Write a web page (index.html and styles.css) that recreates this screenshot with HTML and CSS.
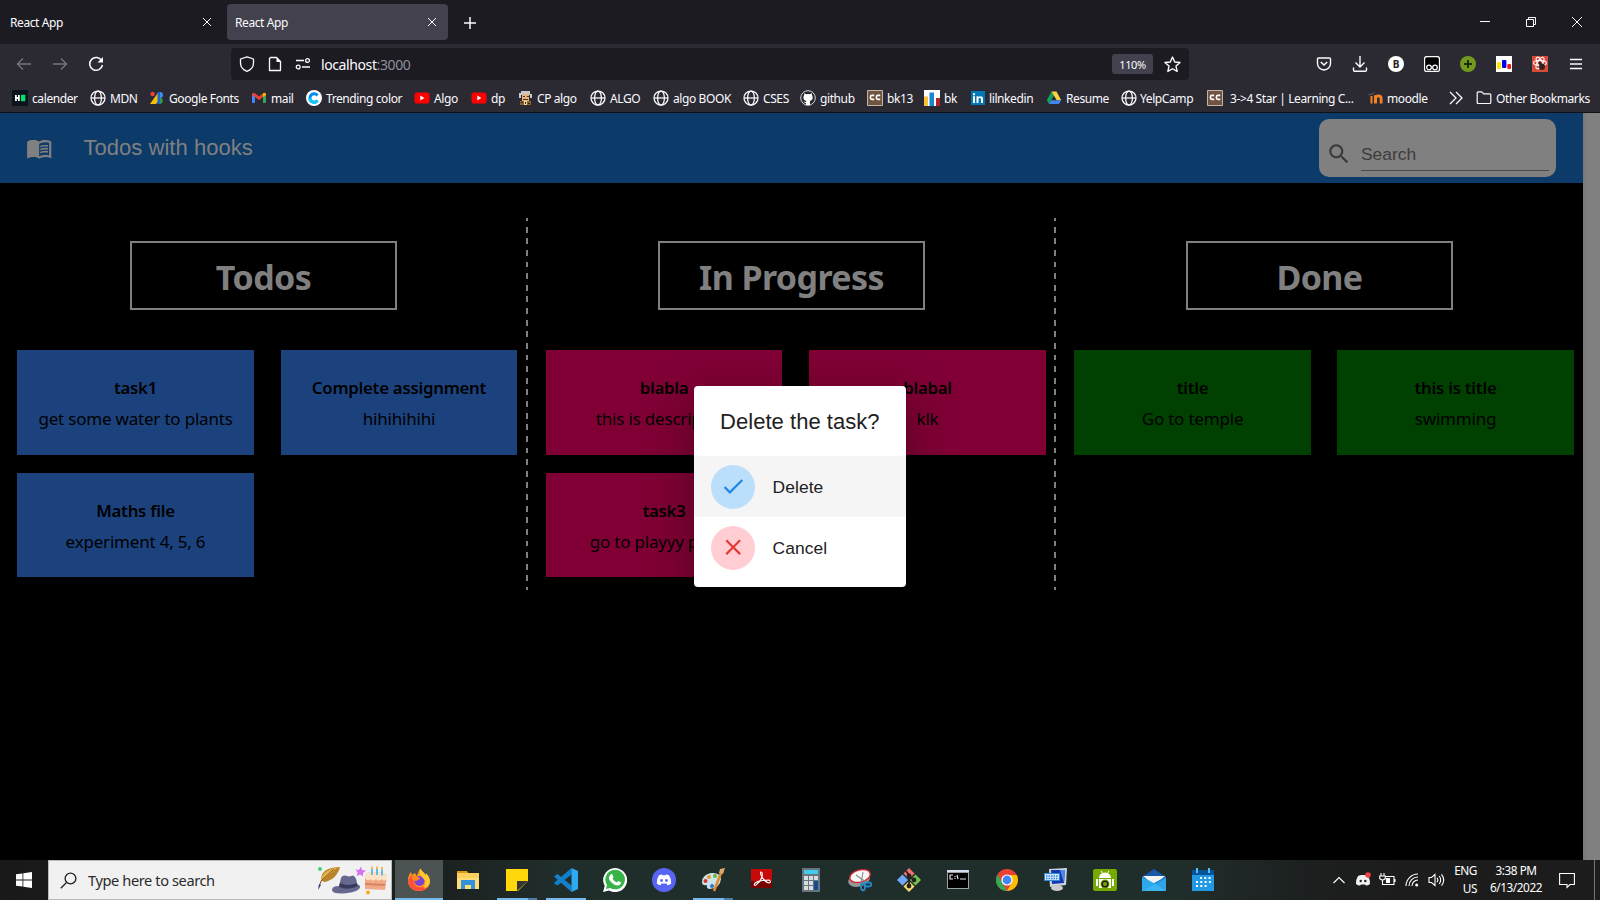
FILE: index.html
```html
<!DOCTYPE html>
<html lang="en">
<head>
<meta charset="utf-8">
<title>React App</title>
<link rel="stylesheet" href="styles.css">
</head>
<body>
<svg class="defs" width="0" height="0">
  <defs>
    <symbol id="globe" viewBox="0 0 16 16"><g fill="none" stroke="#fbfbfe" stroke-width="1.25"><circle cx="8" cy="8" r="7"/><ellipse cx="8" cy="8" rx="3.4" ry="7"/><path d="M1 8h14"/></g></symbol>
    <symbol id="yt" viewBox="0 0 16 16"><rect x="0.5" y="2.5" width="15" height="11" rx="2.6" fill="#f00"/><path d="M6.3 5.6v4.8L10.4 8z" fill="#fff"/></symbol>
    <symbol id="cc" viewBox="0 0 16 16"><path d="M.5.5h15v15H.5z" fill="#6f5541" stroke="#c5b5a5"/><path d="M7.200 5.400H5Q3.400 5.400 3.400 7v.8q0 1.600 1.600 1.600h2.200M13.200 5.400H11Q9.400 5.400 9.400 7v.8q0 1.600 1.600 1.600h2.200" fill="none" stroke="#fff" stroke-width="1.600"/></symbol>
  </defs>
</svg>
<div class="screen">
  <header class="tabs">
    <div class="tab"><span>React App</span><svg width="10" height="10" viewBox="0 0 10 10"><path d="M1 1l8 8M9 1L1 9"/></svg></div>
    <div class="tab active"><span>React App</span><svg width="10" height="10" viewBox="0 0 10 10"><path d="M1 1l8 8M9 1L1 9"/></svg></div>
    <svg class="plus" width="14" height="14" viewBox="0 0 14 14"><path d="M7 1v12M1 7h12"/></svg>
    <div class="winctl">
      <svg width="10" height="10" viewBox="0 0 10 10"><path d="M0 4.500h10"/></svg>
      <svg width="10" height="10" viewBox="0 0 10 10"><path d="M.5 2.500h7v7h-7zM2.500 2.500v-2h7v7h-2"/></svg>
      <svg width="10" height="10" viewBox="0 0 10 10"><path d="M0 0l10 10M10 0L0 10"/></svg>
    </div>
  </header>

  <nav class="toolbar">
    <div class="navbtns">
      <svg class="dim" width="16" height="16" viewBox="0 0 16 16"><path d="M15 8H1.500M7 2.500L1.500 8 7 13.500"/></svg>
      <svg class="dim" width="16" height="16" viewBox="0 0 16 16"><path d="M1 8h13.500M9 2.500L14.500 8 9 13.500"/></svg>
      <svg width="16" height="16" viewBox="0 0 16 16"><path d="M13.800 5A6.400 6.400 0 1 0 14.400 9" stroke-width="1.500"/><path d="M15 1v5.500H9.500z" fill="#fbfbfe" stroke="none"/></svg>
    </div>
    <div class="urlbar">
      <svg width="16" height="16" viewBox="0 0 16 16"><path d="M8 .8L14.500 3v4c0 4-3 7-6.500 8.300C4.500 14 1.500 11 1.500 7V3z" stroke-linejoin="round"/></svg>
      <svg width="16" height="16" viewBox="0 0 16 16"><path d="M3.500 1.500h6l4 4v9h-11v-12z" stroke-linejoin="round"/><path d="M9.500 1v5h4.500z" fill="#fbfbfe" stroke="none"/></svg>
      <svg width="16" height="16" viewBox="0 0 16 16"><path d="M1 4.500h8M7 11h8" stroke-width="1.500"/><circle cx="12.500" cy="4.500" r="1.900"/><circle cx="3.200" cy="11" r="1.900"/></svg>
      <span class="url">localhost<em>:3000</em></span>
      <span class="zoomlvl">110%</span>
      <svg class="star" width="17" height="17" viewBox="0 0 16 16"><path d="M8 1l2.100 4.600 5 .5-3.800 3.400 1.100 5L8 12l-4.400 2.500 1.100-5L.9 6.100l5-.5z" stroke-linejoin="round"/></svg>
    </div>
    <div class="ext">
      <svg width="16" height="16" viewBox="0 0 16 16"><path d="M2.500 2h11q1 0 1 1v4.500a6.500 6.500 0 0 1-13 0V3q0-1 1-1z" stroke-width="1.400"/><path d="M4.800 6L8 9l3.200-3" stroke-width="1.600"/></svg>
      <svg width="16" height="16" viewBox="0 0 16 16"><path d="M8 0v11M3.500 6.500L8 11l4.500-4.500M1.500 11.500v2.500q0 1.200 1.200 1.200h10.600q1.200 0 1.200-1.200v-2.500" stroke-width="1.400"/></svg>
      <span class="bold-b">B</span>
      <svg width="16" height="16" viewBox="0 0 16 16"><rect x=".5" y=".5" width="15" height="15" rx="2.500" fill="#000"/><circle cx="5" cy="11.500" r="2.300"/><circle cx="11" cy="11.500" r="2.300"/></svg>
      <svg width="16" height="16" viewBox="0 0 16 16"><circle cx="8" cy="8" r="8" fill="#739a1f" stroke="none"/><path d="M8 4v8M4 8h8" stroke="#1f2c0c" stroke-width="2"/></svg>
      <svg width="16" height="16" viewBox="0 0 16 16"><path fill="#fff" stroke="none" d="M0 0h16v16H0z"/><rect x="1" y="6" width="4" height="7" rx="1" fill="#ffe800" stroke="none"/><rect x="6" y="4" width="4.400" height="8" rx="1" fill="#0000f0" stroke="none"/><rect x="11.300" y="8" width="3.700" height="5" rx="1" fill="#f01818" stroke="none"/></svg>
      <svg width="16" height="16" viewBox="0 0 16 16"><path fill="#d64a38" stroke="none" d="M0 0h16v16H0z"/><g stroke-width="1.100"><ellipse cx="8" cy="7" rx="6.500" ry="2.500"/><ellipse cx="8" cy="7" rx="6.500" ry="2.500" transform="rotate(60 8 7)"/><ellipse cx="8" cy="7" rx="6.500" ry="2.500" transform="rotate(120 8 7)"/></g><ellipse cx="10" cy="10.800" rx="3" ry="3.200" fill="#35201e" stroke="none"/><circle cx="8" cy="7.200" r="1.400" fill="#35201e" stroke="none"/></svg>
      <svg width="16" height="16" viewBox="0 0 16 16"><path d="M2 3.500h12M2 8h12M2 12.500h12" stroke-width="1.400"/></svg>
    </div>
  </nav>

  <nav class="bookmarks">
    <a><svg viewBox="0 0 16 16"><path fill="#0b141e" d="M0 0h16v16H0z"/><path fill="#fff" d="M3 5h1.800v2H6V5h1.800v6H6V9H4.800v2H3z"/><rect x="9" y="4.800" width="4.300" height="6.400" rx=".6" fill="#05e36b"/></svg>calender</a>
    <a><svg><use href="#globe"/></svg>MDN</a>
    <a><svg viewBox="0 0 16 16"><path d="M8.500 2H11v6l-5 6H0z" fill="#fbbc04"/><circle cx="2.600" cy="4" r="2.200" fill="#ea4335"/><path d="M7.500 2h3v12h-3z" fill="#1a66d8"/><path d="M10 2a3 3 0 0 1 0 6z" fill="#3f8cf5"/><path d="M10 7.500a3.300 3.300 0 0 1 0 6.500z" fill="#2a9d4c"/></svg>Google Fonts</a>
    <a><svg viewBox="0 0 16 16"><path fill="#4285f4" d="M1 4l3 2.500V13H2q-1 0-1-1z"/><path fill="#34a853" d="M15 4l-3 2.500V13h2q1 0 1-1z"/><path fill="#ea4335" d="M1 4q1-2 3-.7L8 6.500l4-3.200v3.600L8 10 1 4.800z"/><path fill="#fbbc04" d="M12 3.300q2-1.300 3 .7v.9l-3 2.200z"/></svg>mail</a>
    <a><svg viewBox="0 0 16 16"><circle cx="8" cy="8" r="8" fill="#fff"/><path d="M11.500 5.500A4.200 4.200 0 1 0 11.500 10.500" fill="none" stroke="#008cf5" stroke-width="3"/><path d="M3.800 8A4.200 4.200 0 0 0 11.500 10.500" fill="none" stroke="#16c7f6" stroke-width="3"/></svg>Trending color</a>
    <a><svg><use href="#yt"/></svg>Algo</a>
    <a><svg><use href="#yt"/></svg>dp</a>
    <a><svg viewBox="0 0 16 16"><path d="M3 1h9v3h2v4h-2V5H3v3H1V3h2z" fill="#c6c9c8"/><path d="M4 4h7v7H4z" fill="#e8b27c"/><path d="M5 6h2v1H5zM9 6h2v1H9zM5 9h5v1H5z" fill="#50321f"/><path d="M2 11h11v4H2z" fill="#8a6230"/><path d="M6 11h3v4H6z" fill="#e9d8a4"/><path d="M7 12h1v2H7zM3 12h2v1H3zM10 13h2v1h-2z" fill="#37210f"/></svg>CP algo</a>
    <a><svg><use href="#globe"/></svg>ALGO</a>
    <a><svg><use href="#globe"/></svg>algo BOOK</a>
    <a><svg><use href="#globe"/></svg>CSES</a>
    <a><svg viewBox="0 0 16 16"><circle cx="8" cy="8" r="7.300" fill="#24292e" stroke="#d8d8dc" stroke-width="1"/><path fill="#fff" d="M4.200 3.300l2 1q1.800-.5 3.600 0l2-1 .3 2.300q1 1.400.4 3.300-.7 1.700-2.600 2l.2 4.100H6v-2q-1.800.3-2.500-1.400l1 .1q.7.700 1.600.2l.2-1q-2-.3-2.700-2-.6-1.900.4-3.300z"/></svg>github</a>
    <a><svg><use href="#cc"/></svg>bk13</a>
    <a><svg viewBox="0 0 16 16"><path fill="#fff" d="M0 0h16v16H0z"/><path fill="#fbbf3a" d="M0 6.500h4V16H0z"/><path fill="#1987cf" d="M5.500 2.500h4.500V16H5.500z"/><path fill="#b3202e" d="M12 8h4v8h-4z"/></svg>bk</a>
    <a><svg viewBox="0 0 16 16"><path fill="#0077b5" d="M1 1h14v14H1z"/><path fill="#fff" d="M3 6.300h2V13H3zM3 3.300h2v2H3zM6.500 6.300h2v.8q2-1.700 4.500.3V13h-2V8.500q-1.200-1.200-2.500 0V13h-2z"/></svg>lilnkedin</a>
    <a><svg viewBox="0 0 16 16"><path fill="#12a05c" d="M5.500 1.500L.8 10.300 3 14l5-8.500z"/><path fill="#ffcf45" d="M5.500 1.500h5l4.700 8.800h-4.500z"/><path fill="#4284f4" d="M3 14l2.200-3.700h10L13 14z"/></svg>Resume</a>
    <a><svg><use href="#globe"/></svg>YelpCamp</a>
    <a><svg><use href="#cc"/></svg>3-&gt;4 Star | Learning C...</a>
    <a><svg viewBox="0 0 16 16"><path fill="#f58220" d="M3.500 6h2v7.500h-2zM7 5.500q7.500-3 8.500 2v6h-2.800V8q-1.200-1.500-2.700 0v5.500H7z"/><path d="M0 4.500L8 2l-2 3-4 .5z" fill="#4b4648"/></svg>moodle</a>
    <svg class="more" viewBox="0 0 16 16"><path d="M2 2l6 6-6 6M8 2l6 6-6 6" fill="none" stroke="#fbfbfe" stroke-width="1.300"/></svg>
    <a class="other"><svg viewBox="0 0 16 16"><path d="M1.200 2.800q0-1 1-1h3.500l2 2h6.100q1 0 1 1v7.700q0 1-1 1H2.200q-1 0-1-1z" fill="none" stroke="#fbfbfe" stroke-width="1.200"/></svg>Other Bookmarks</a>
  </nav>

  <main class="page">
    <div class="app">
      <div class="appbar">
        <svg class="book" viewBox="0 0 24 24"><path d="M21 5c-1.110-.35-2.330-.5-3.500-.5-1.950 0-4.050.4-5.500 1.500-1.450-1.100-3.550-1.500-5.500-1.500S2.450 4.900 1 6v14.650c0 .25.25.5.5.5.1 0 .15-.05.25-.05C3.100 20.450 5.050 20 6.500 20c1.950 0 4.050.4 5.500 1.500 1.350-.85 3.800-1.500 5.500-1.500 1.650 0 3.350.3 4.750 1.050.1.050.15.050.25.050.25 0 .5-.25.5-.5V6c-.6-.45-1.250-.75-2-1zm0 13.500c-1.100-.35-2.300-.5-3.500-.5-1.700 0-4.150.65-5.500 1.500V8c1.350-.85 3.800-1.500 5.500-1.500 1.200 0 2.400.15 3.500.5v11.500zM17.500 10.500c.88 0 1.730.09 2.500.26V9.240c-.79-.15-1.640-.24-2.500-.24-1.700 0-3.240.29-4.500.83v1.660c1.130-.64 2.700-.99 4.500-.99zM13 12.490v1.660c1.130-.64 2.700-.99 4.500-.99.88 0 1.730.09 2.500.26V11.900c-.79-.15-1.640-.24-2.500-.24-1.700 0-3.240.3-4.500.83zM17.500 14.330c-1.700 0-3.240.29-4.500.83v1.660c1.130-.64 2.700-.99 4.500-.99.88 0 1.730.09 2.500.26v-1.520c-.79-.16-1.640-.24-2.500-.24z"/></svg>
        <h6>Todos with hooks</h6>
        <div class="search">
          <svg viewBox="0 0 24 24"><path d="M15.500 14h-.79l-.28-.27C15.410 12.590 16 11.110 16 9.500 16 5.910 13.090 3 9.500 3S3 5.910 3 9.500 5.910 16 9.500 16c1.610 0 3.090-.59 4.230-1.570l.27.28v.79l5 4.990L20.490 19l-4.990-5zm-6 0C7.010 14 5 11.990 5 9.500S7.010 5 9.500 5 14 7.010 14 9.500 11.990 14 9.500 14z"/></svg>
          <span>Search</span>
        </div>
      </div>
      <div class="board">
        <section class="col todo">
          <h2>Todos</h2>
          <div class="cards">
            <article><h4>task1</h4><p>get some water to plants</p></article>
            <article><h4>Complete assignment</h4><p>hihihihihi</p></article>
            <article><h4>Maths file</h4><p>experiment 4, 5, 6</p></article>
          </div>
        </section>
        <section class="col doing">
          <h2>In Progress</h2>
          <div class="cards">
            <article><h4>blabla</h4><p>this is description</p></article>
            <article><h4>blabal</h4><p>klk</p></article>
            <article><h4>task3</h4><p>go to playyy please</p></article>
          </div>
        </section>
        <section class="col done">
          <h2>Done</h2>
          <div class="cards">
            <article><h4>title</h4><p>Go to temple</p></article>
            <article><h4>this is title</h4><p>swimming</p></article>
          </div>
        </section>
      </div>
    </div>
    <div class="scrollbar"></div>
  </main>

  <footer class="taskbar">
    <div class="start"><svg width="16" height="16" viewBox="0 0 16 16"><path fill="#fff" d="M0 2.300l6.500-.9v6.200H0zM7.300 1.300L16 0v7.600H7.300zM0 8.400h6.500v6.200L0 13.700zM7.300 8.400H16V16l-8.700-1.300z"/></svg></div>
    <div class="winsearch">
      <svg width="17" height="17" viewBox="0 0 17 17"><circle cx="10.500" cy="6.500" r="5.400" fill="none" stroke="#222" stroke-width="1.300"/><path d="M6.500 10.500L.8 16.200" stroke="#222" stroke-width="1.300"/></svg>
      <span>Type here to search</span>
      <svg class="art" width="72" height="30" viewBox="0 0 72 30"><circle cx="4" cy="4" r="2" fill="#45d16b"/><path d="M5 15C5 7 11 2 24 2c-2 8-8 14-16 15z" fill="#b98427"/><path d="M5 15C6 8 12 4 22 2L7 15z" fill="#e3b04c"/><path d="M18 4L5 16l-2 6" fill="none" stroke="#7b531e"/><path d="M2 25l1-6 2 1z" fill="#47417a"/><path d="M16 25q0-4 7-4l2-8q1-3 4-2.500l4 1 4-1q4 2 4 9 4 1 3 3-2 5-18 6-10 0-10-3.500z" fill="#66698d"/><path d="M24 18q8 4 17 0l1 3q-10 5-19 1z" fill="#39395c"/><path d="M45 1.500L46 5l4 .5-3 2.500 0 3.500-3-2-3.500 1.500 1.200-3.500L39.500 4.500 43 5z" fill="#d671f4"/><path d="M49 10l4-3 16 1 2 3-2 14-20-1z" fill="#f0ab86"/><path d="M49 10l4-3 16 1 2 3v3q-3 3-5 0-3 3-6 0-3 3-6 0-2 3-5-1z" fill="#fce3c5"/><path d="M49 18l20 1v2l-20-1z" fill="#d88262"/><path d="M56 4v6M61 4v6M66 4.500v6" stroke="#52b8e5" stroke-width="1.800"/><path d="M56 1.500v2.500M61 1.500v2.500M66 2v2.500" stroke="#f5a51c" stroke-width="1.500"/><circle cx="52" cy="27.500" r="2" fill="#f6ab13"/></svg>
    </div>
    <div class="apps">
      <div class="on"><svg viewBox="0 0 24 24"><path fill="#ff9a1f" d="M12 23C5.500 23 1 18.500 1 12.500c0-4 1.500-6.500 3-8.500l1 3 3-2 1.500 3C11 7 10.500 4 13.500.5c1 3 4 4 5 6.500l1-1.500c3 4 3.500 6 3.500 8C23 19 18 23 12 23z"/><path fill="#ff5038" d="M12 23C5.500 23 1 18.500 1 12.500L4 7l4 2-1 6q2 5 8 4l7-3q-2 7-10 7z"/><circle cx="12.500" cy="13" r="5" fill="#7b43d3"/><path fill="#ffca2c" d="M13.500.5c1 3 4 4 5 6.500l1-1.500c4 5 4 9 2 12q-2 3-5 2 4-6-1-10-4-2-2-9z"/><path d="M4 9q5-2 9 1-1 3-6 3z" fill="#ff861f"/></svg></div>
      <div><svg viewBox="0 0 24 24"><path fill="#d99a17" d="M1 3h10l2 3H1z"/><path fill="#ffdc76" d="M1 5h22v16H1z"/><path fill="#3390dc" d="M5 21v-9h14v9h-4v-4H9v4z"/><path d="M1 5h22v5H1z" fill="#fbd05c"/></svg></div>
      <div class="run multi"><svg viewBox="0 0 24 24"><path fill="#ffd70a" d="M1 1h22v12L13 23H1z"/><path fill="#353535" d="M12 23V13h11z"/><path fill="#ffd70a" d="M12 13h11v-1H12z"/></svg></div>
      <div class="run"><svg viewBox="0 0 24 24"><path fill="#0e7fc9" d="M17.500 0v6.500L3.500 17.500 0 15.500 1 14z"/><path fill="#1681cb" d="M0 8.500l3.500-2.500 14 11.500V24z"/><path fill="#2fa9f2" d="M17.500 0L24 3v18l-6.500 3z"/></svg></div>
      <div><svg viewBox="0 0 24 24"><path fill="#fff" d="M0 24l1.700-6A12 12 0 1 1 6 22.400z"/><path fill="#38b34a" d="M3 21l1-4a9.800 9.800 0 1 1 3.200 3z"/><path fill="#fff" d="M7.500 6.500q1-.8 2 0l1 2.500-1 1.500q1.500 3 4.500 4l1.200-1.500 2.800 1.300q0 3-3.500 3.200-3 0-6-3t-2.500-5.500z"/></svg></div>
      <div><svg viewBox="0 0 24 24"><circle cx="12" cy="12" r="12" fill="#5865f2"/><path fill="#fff" d="M7 7.300q1.500-.8 3-.8l.5.800h3l.5-.8q1.500 0 3 .8 2.500 3.700 2.200 8.200-1.800 1.500-3.700 1.700l-1-1.700h-5l-1 1.700q-1.900-.2-3.700-1.700Q4.500 11 7 7.300z"/><circle cx="9.500" cy="12.500" r="1.400" fill="#5865f2"/><circle cx="14.500" cy="12.500" r="1.400" fill="#5865f2"/></svg></div>
      <div class="run multi"><svg viewBox="0 0 24 24"><path fill="#c9e3ee" d="M10 5q9-1 10 6-1 9-11 10-4 0-3-4-5 1-5-3 0-7 9-9z"/><circle cx="8" cy="9" r="2" fill="#e99b25"/><circle cx="14" cy="8" r="2" fill="#6ab83a"/><circle cx="4.500" cy="13" r="2" fill="#d3342b"/><circle cx="11" cy="18" r="2" fill="#2e77c4"/><path d="M20 5L13 23" stroke="#df8a2b" stroke-width="2.600"/><path d="M18 5l1-4 5-1-2 6z" fill="#dda76b"/></svg></div>
      <div><svg viewBox="0 0 24 24"><path fill="#c70909" d="M1 1h21v19H1z"/><path fill="#790000" d="M1 13h21v7H1z"/><path d="M11 4q2 0 1 5-2 5-6 8-3 1-1-2 4-3 14-3 3 2 0 3-5-1-8-8-1-3 0-3z" fill="none" stroke="#fff" stroke-width="1.100"/></svg></div>
      <div><svg viewBox="0 0 24 24"><path fill="#69757e" d="M3 0h18v24H3z"/><path fill="#42cbed" d="M5 2h14v4H5z"/><path fill="#d8dde1" d="M5 8h4v4H5zm5 0h4v4h-4zm5 0h4v4h-4zM5 13h4v4H5zm5 0h4v4h-4zM5 18h4v4H5zm5 0h4v4h-4z"/><path fill="#174c93" d="M15 13h4v9h-4z"/></svg></div>
      <div><svg viewBox="0 0 24 24"><ellipse cx="11" cy="12" rx="11" ry="6.500" fill="#969696" transform="rotate(-15 11 12)"/><ellipse cx="12" cy="8" rx="10.500" ry="6" fill="#f7f7f7" stroke="#d3232f" stroke-width="1.300" transform="rotate(-15 12 8)"/><path d="M8 7l10 7M15 4l-2 12" stroke="#888" stroke-width="1.100"/><ellipse cx="15" cy="19" rx="2" ry="3.500" fill="none" stroke="#2489cb" stroke-width="1.800"/><ellipse cx="20" cy="16.500" rx="3.500" ry="2" fill="none" stroke="#2489cb" stroke-width="1.800"/></svg></div>
      <div><svg viewBox="0 0 24 24"><path fill="#f06f6f" d="M12 0l5.500 5.500L12 11 6.500 5.500z"/><path fill="#70a8ff" d="M5.500 6.500L11 12l-5.500 5.500L0 12z"/><path fill="#73c34e" d="M18.500 6.500L24 12l-5.500 5.500L13 12z"/><path fill="#f5dc6b" d="M12 13l5.500 5.500L12 24l-5.500-5.500z"/><path d="M9 3l3 4v12M12 8l5 4" stroke="#222" stroke-width="1.700" fill="none"/><circle cx="12" cy="8" r="2.400" fill="#222"/><circle cx="17" cy="12" r="2.400" fill="#222"/><circle cx="12" cy="18" r="2.400" fill="#222"/></svg></div>
      <div><svg viewBox="0 0 24 24"><path fill="#9ba1a9" d="M1 2h22v19H1z"/><path fill="#d9deee" d="M1 2h22v2H1z"/><path fill="#000" d="M2 5h20v15H2z"/><path d="M7 7H4v4h3M9 8v1M9 10v1M11 7l1 4M14 11h6" stroke="#e4e4e4" fill="none" stroke-width="1.200"/></svg></div>
      <div><svg viewBox="0 0 24 24"><circle cx="12" cy="12" r="11" fill="#e94235"/><path d="M2.500 6.500L8 16l4 7A11 11 0 0 1 2.500 6.500z" fill="#34a853"/><path d="M12 7h9.800A11 11 0 0 1 12 23l5-9z" fill="#fbbc04"/><circle cx="12" cy="12" r="5.600" fill="#fff"/><circle cx="12" cy="12" r="4.400" fill="#4285f4"/></svg></div>
      <div><svg viewBox="0 0 24 24"><path fill="#cbd4dc" d="M5 1l18-1-1 17-16 2z"/><path fill="#1539ad" d="M7 2l14 0-1 13-12 1z"/><path fill="#4d87ee" d="M16 2h5l-1 13z"/><path fill="#cfe6ff" stroke="#3187db" d="M.5 5.500h15v7H.5z"/><path d="M2 8h12M2 10.500h12" stroke="#3986ce" stroke-width="1.400" stroke-dasharray="1.500 1"/><ellipse cx="13" cy="20" rx="6" ry="3" fill="#cbcbcb"/></svg></div>
      <div><svg viewBox="0 0 24 24"><rect y="1" width="24" height="22" rx="2" fill="#75aa00"/><path d="M6 10a6 5.500 0 0 1 12 0zM6 11h12v9H6zM3 11h2v7H3zM19 11h2v7h-2z" fill="#fff"/><path d="M8 3l2 3M16 3l-2 3" stroke="#fff"/><circle cx="12" cy="16" r="4.500" fill="#75aa00"/><circle cx="12" cy="16" r="2.800" fill="none" stroke="#222" stroke-width="1.500"/></svg></div>
      <div><svg viewBox="0 0 24 24"><path fill="#1657a8" d="M0 9L12 1l12 8v5H0z"/><path fill="#f2f2f2" d="M1 8h22l-11 9z"/><path fill="#2ca9ed" d="M0 9l12 6 12-6v14H0z"/><path fill="#1684d3" d="M12 15l12-6v14z"/><path fill="#f2f2f2" d="M1 8h22l-11 7z"/><path fill="#48c2f7" d="M0 23l24-13v2L24 23z" opacity=".5"/></svg></div>
      <div><svg viewBox="0 0 24 24"><path fill="#2299e5" d="M1 5h22v18H1z"/><path fill="#075299" d="M1 2h22v5H1z"/><path d="M6 0v5M18 0v5" stroke="#48c4f8" stroke-width="2"/><path d="M9 10h11M5 14h15M5 18h11" stroke="#fff" stroke-width="2" stroke-dasharray="2 2.300"/></svg></div>
    </div>
    <div class="tray">
      <svg width="14" height="14" viewBox="0 0 14 14"><path d="M1.500 10L7 4.500l5.500 5.500"/></svg>
      <svg width="16" height="16" viewBox="0 0 16 16"><path fill="#f2f2f2" stroke="none" d="M3 4q2-1 4-1h3q2 0 3 1 2.500 4 2 8-2 1.500-4 1.500l-1-1H6l-1 1Q3 13.500 1 12 .5 8 3 4z"/><circle cx="5.700" cy="9" r="1.200" fill="#222" stroke="none"/><circle cx="10.300" cy="9" r="1.200" fill="#222" stroke="none"/><circle cx="13" cy="3" r="2.800" fill="#ed4245" stroke="none"/></svg>
      <svg width="17" height="16" viewBox="0 0 17 16"><path d="M6 4.500h9v8H5M16 7v3M2 1v3M5 1v3M.7 4h5.600v2.500q-2.800 3-5.600 0zM3.500 8v4.500h3"/><path d="M7.500 6.500h3v4h-3z" fill="#fff"/></svg>
      <svg width="14" height="14" viewBox="0 0 14 14"><path d="M1 13A12 12 0 0 1 13 1M4 13a9 9 0 0 1 9-9M7 13a6 6 0 0 1 6-6"/><circle cx="11.700" cy="12" r="1.500" fill="#fff" stroke="none"/></svg>
      <svg width="17" height="14" viewBox="0 0 17 14"><path d="M1 4.500h2.500L7 1.500v11L3.500 9.500H1zM9 4.800q1.500 2.200 0 4.400M11.200 3q3 4 0 8M13.500 1.300q4.500 5.700 0 11.400"/></svg>
      <div class="lang">ENG<br>US</div>
      <div class="clock">3:38 PM<br>6/13/2022</div>
      <svg class="note" width="16" height="17" viewBox="0 0 16 17"><path d="M.6 1.500h14.800v11H11l-3 3v-3H.6z"/></svg>
      <i></i>
    </div>
  </footer>

  <div class="dialog">
    <h2>Delete the task?</h2>
    <ul>
      <li class="focus"><b class="ok"><svg viewBox="0 0 24 24"><path d="M9 16.170L4.830 12l-1.420 1.410L9 19 21 7l-1.410-1.410z"/></svg></b><span>Delete</span></li>
      <li><b class="no"><svg viewBox="0 0 24 24"><path d="M19 6.410L17.590 5 12 10.590 6.410 5 5 6.410 10.590 12 5 17.590 6.410 19 12 13.410 17.590 19 19 17.590 13.410 12z"/></svg></b><span>Cancel</span></li>
    </ul>
  </div>
</div>
</body>
</html>
```
FILE: styles.css
```css
* { box-sizing: border-box; }
body { margin: 0; overflow: hidden; background: #000; font-family: "Noto Sans", "Open Sans", sans-serif; }
h2, h4, h6, p, ul { margin: 0; padding: 0; }
svg { flex: none; display: block; }
.defs { position: absolute; }
.screen { position: relative; width: 1600px; height: 900px; display: flex; flex-direction: column; overflow: hidden; }

/* browser window */
.tabs { height: 44px; flex: none; background: #1c1b22; display: flex; align-items: center; }
.tabs svg { fill: none; stroke: #fbfbfe; stroke-width: 1; }
.tab { width: 221px; height: 36px; padding: 0 11px 0 8px; display: flex; align-items: center; justify-content: space-between; color: #fbfbfe; font-size: 12px; letter-spacing: -.4px; border-radius: 4px; }
.tab:first-child { margin-left: 2px; margin-right: 4px; }
.tab.active { background: #42414d; }
.tabs .plus { margin-left: 15px; stroke-width: 1.5; margin-top: 1px; }
.winctl { margin-left: auto; display: flex; gap: 36px; padding-right: 18px; }
.winctl svg { stroke-width: 1; }

.toolbar { height: 40px; flex: none; background: #2b2a33; display: flex; align-items: center; }
.toolbar svg { fill: none; stroke: #fbfbfe; stroke-width: 1.3; }
.navbtns { display: flex; gap: 20px; padding-left: 16px; width: 231px; }
.toolbar .dim { stroke: #77767d; }
.urlbar { width: 958px; height: 32px; border-radius: 4px; background: #1c1b22; display: flex; align-items: center; gap: 12px; padding: 0 8px 0 8px; }
.url { color: #fbfbfe; font-size: 14px; letter-spacing: -.4px; margin-left: -2px; flex: 1; }
.url em { font-style: normal; color: #8f8f9d; }
.zoomlvl { width: 41px; height: 20px; margin-right: -1px; border-radius: 3px; background: #42414d; color: #fbfbfe; font-size: 11px; letter-spacing: -.4px; line-height: 21px; text-align: center; }
.ext { margin-left: auto; display: flex; gap: 20px; padding-right: 16px; }
.bold-b { width: 16px; height: 16px; border-radius: 8px; background: #fff; color: #222; font-weight: 700; font-size: 10px; line-height: 16px; text-align: center; }

.bookmarks { height: 29px; flex: none; background: #2b2a33; border-bottom: 1px solid #111015; display: flex; align-items: center; padding: 0 0 0 12px; color: #fbfbfe; font-size: 12px; letter-spacing: -.4px; }
.bookmarks a { display: flex; align-items: center; gap: 4px; white-space: nowrap; flex: none; }
.bookmarks svg { width: 16px; height: 16px; }
.bookmarks a:nth-child(1) { width: 78px; }
.bookmarks a:nth-child(2) { width: 60px; }
.bookmarks a:nth-child(3) { width: 101px; gap: 3px; }
.bookmarks a:nth-child(4) { width: 55px; }
.bookmarks a:nth-child(5) { width: 108px; }
.bookmarks a:nth-child(6) { width: 57px; }
.bookmarks a:nth-child(7) { width: 47px; }
.bookmarks a:nth-child(8) { width: 72px; gap: 3px; }
.bookmarks a:nth-child(9) { width: 63px; }
.bookmarks a:nth-child(10) { width: 90px; }
.bookmarks a:nth-child(11) { width: 57px; }
.bookmarks a:nth-child(12) { width: 67px; }
.bookmarks a:nth-child(13) { width: 57px; }
.bookmarks a:nth-child(14) { width: 46px; }
.bookmarks a:nth-child(15) { width: 76px; gap: 3px; }
.bookmarks a:nth-child(16) { width: 75px; }
.bookmarks a:nth-child(17) { width: 86px; gap: 3px; }
.bookmarks a:nth-child(18) { width: 160px; gap: 7px; }
.bookmarks a:nth-child(19) { width: 81px; }
.bookmarks .more { margin-right: 12px; }

/* web page */
.page { height: 747px; flex: none; display: flex; }
.app { width: 1583px; }
.scrollbar { flex: 1; background: linear-gradient(to right, #777, #808080 5px); }
.appbar { height: 70px; background: #0c3a69; display: flex; align-items: center; padding: 0 27px 0 26px; color: #808080; }
.book { width: 26.4px; height: 26.4px; fill: #808080; }
.appbar h6 { margin-left: 31px; font: 400 22px/35px "Liberation Sans", Arial, sans-serif; letter-spacing: .04px; padding-bottom: 2px; }
.search { margin-left: auto; width: 237px; height: 58px; border-radius: 10px; background: #808080; display: flex; align-items: flex-end; padding: 0 7px 6px 7px; }
.search svg { width: 26px; height: 26px; fill: #3b3b3b; margin-bottom: 4px; }
.search span { margin-left: 9px; flex: 1; border-bottom: 1px solid #4a4a4a; color: #3d3d3d; font: 17.4px/20px "Liberation Sans", Arial, sans-serif; padding-bottom: 6px; }

.board { display: grid; grid-template-columns: 528px 528px 527px; padding-top: 35px; }
.col { height: 372px; padding: 23px 11px 0 17px; background: repeating-linear-gradient(to bottom, #808080 0 2.900px, transparent 2.900px 8.720px, #808080 8.720px 11.625px) right top / 2px 100% no-repeat; }
.col.doing { padding-left: 18px; padding-right: 10px; }
.col.done { background: none; padding-left: 18px; padding-right: 9px; }
.col h2 { width: 267px; height: 69px; margin: 0 0 40px 113px; border: 2px solid #808080; color: #808080; font-size: 34px; letter-spacing: -.6px; line-height: 68px; text-align: center; }
.col.doing h2, .col.done h2 { margin-left: 112px; }
.cards { display: grid; grid-template-columns: 237px 236px; justify-content: space-between; row-gap: 18px; }
.doing .cards { grid-template-columns: 236px 237px; }
.done .cards { grid-template-columns: 237px 237px; }
.cards article { height: 105px; text-align: center; color: #000; white-space: nowrap; overflow: hidden; }
.cards article:nth-child(3) { height: 104px; }
.todo article { background: #1c427e; }
.doing article { background: #800035; }
.done article { background: #004000; }
.cards h4 { font-size: 16.8px; letter-spacing: -.25px; font-weight: 600; line-height: 24px; margin-top: 26px; }
.cards p { font-size: 17px; letter-spacing: -.2px; line-height: 24px; margin-top: 7px; }

/* confirmation dialog */
.dialog { position: absolute; left: 694px; top: 386px; width: 212px; height: 201px; background: #fff; border-radius: 4px; box-shadow: 0 12px 16px -8px rgba(0,0,0,.2), 0 26px 42px 3px rgba(0,0,0,.14), 0 10px 50px 9px rgba(0,0,0,.12); font-family: "Liberation Sans", Arial, sans-serif; color: #212121; }
.dialog h2 { font-size: 22px; font-weight: 400; line-height: 35px; height: 70px; padding: 18px 26px; letter-spacing: .04px; white-space: nowrap; }
.dialog ul { list-style: none; }
.dialog li { height: 61px; display: flex; align-items: center; gap: 17.500px; padding-left: 17px; font-size: 17.4px; letter-spacing: .1px; }
.dialog li span { padding-top: 1px; }
.dialog .focus { background: #f5f5f5; }
.dialog b { width: 44px; height: 44px; border-radius: 22px; display: grid; place-items: center; }
.dialog b svg { width: 26.4px; height: 26.4px; }
.dialog .ok { background: #bbdefb; fill: #1e88e5; }
.dialog .no { background: #ffcdd2; fill: #e53935; }

/* desktop taskbar */
.taskbar { height: 40px; flex: none; display: flex; background: linear-gradient(to right, #191919 0, #1b2120 440px, #202e2b 560px, #202e2b 1180px, #1d2020 1300px, #1c1c1c 1400px); color: #fff; }
.start { width: 48px; display: grid; place-items: center; }
.winsearch { width: 344px; background: #f1f1f1; border: 1px solid #b9b9b9; display: flex; align-items: center; padding-left: 11px; color: #2b2b2b; font-size: 14.6px; letter-spacing: -.4px; }
.winsearch span { margin-left: 11px; flex: 1; }
.winsearch .art { margin-right: 3px; }
.apps { display: flex; gap: 1px; padding-left: 3px; flex: 1; }
.apps div { width: 48px; display: grid; place-items: center; flex: none; }
.apps svg { width: 24px; height: 24px; }
.apps .on { background: #4b5452; border-bottom: 2px solid #76b9ed; padding-top: 2px; }
.apps .run { background: linear-gradient(#76b9ed, #76b9ed) center bottom / 40px 2px no-repeat; }
.apps .multi { background-image: linear-gradient(to right, #76b9ed 31px, #4d7da3 31px); }
.tray { display: flex; align-items: center; flex: none; width: 268px; }
.tray svg { fill: none; stroke: #fff; stroke-width: 1.1; margin-right: 9px; }
.tray svg:nth-child(2) { margin-right: 8px; }
.tray svg:nth-child(5) { margin-right: 8px; }
.tray .lang, .tray .clock { font-size: 11.8px; letter-spacing: -.45px; line-height: 17.500px; text-align: center; white-space: nowrap; margin-top: -1px; }
.tray .lang { width: 24px; text-align: right; }
.tray .clock { width: 54px; margin: -2px 17px 0 12px; }
.tray .note { margin: 0 19px 0 -1px; }
.tray i { width: 1px; height: 40px; background: #777; }
```
